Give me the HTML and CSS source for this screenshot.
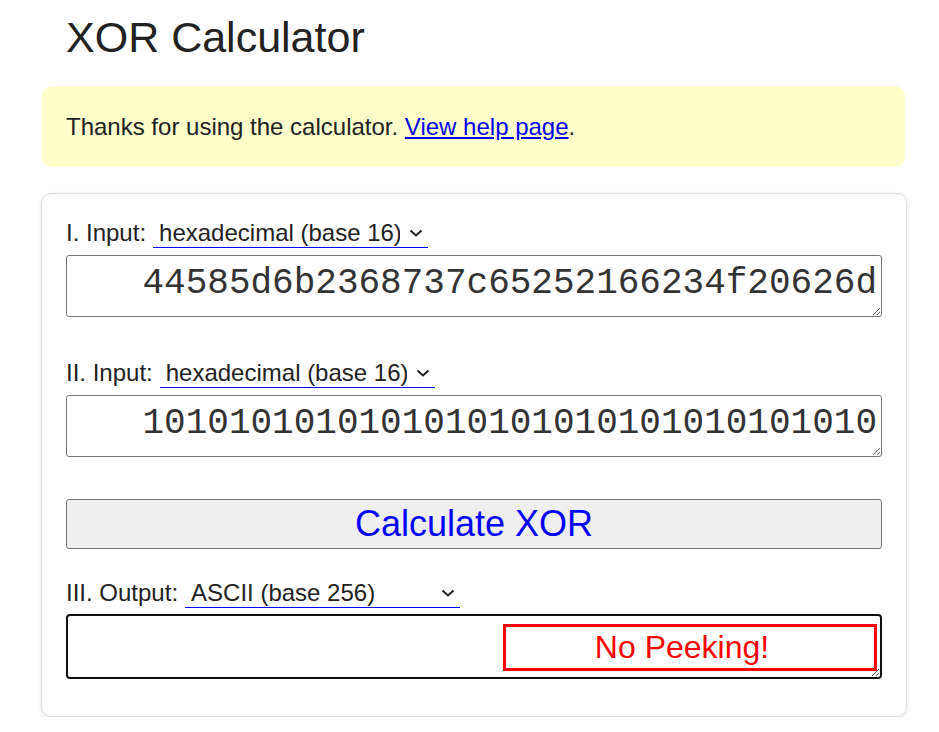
FILE: index.html
```html
<!DOCTYPE html>
<html lang="en">
<head>
<meta charset="utf-8">
<title>XOR Calculator</title>
<link rel="stylesheet" href="styles.css">
</head>
<body>
<div class="page">
  <h1 class="title">XOR Calculator</h1>
  <div class="notice">Thanks for using the calculator. <a href="#" class="help-link">View help page</a>.</div>
  <form class="card" onsubmit="return false;">
    <div class="field">
      <div class="label-row">
        <label class="label" for="in1-base">I. Input:</label>
        <span class="select-wrap">
          <select id="in1-base" class="select">
            <option>hexadecimal (base 16)</option>
            <option>binary (base 2)</option>
            <option>decimal (base 10)</option>
            <option>ASCII (base 256)</option>
          </select>
          <svg class="chevron" width="14" height="8" viewBox="0 0 14 8"><path d="M1.5 1.5 L7 6.5 L12.5 1.5" fill="none" stroke="#222" stroke-width="2"/></svg>
        </span>
      </div>
      <textarea class="value" rows="1" spellcheck="false">44585d6b2368737c65252166234f20626d</textarea>
    </div>
    <div class="field">
      <div class="label-row">
        <label class="label" for="in2-base">II. Input:</label>
        <span class="select-wrap">
          <select id="in2-base" class="select">
            <option>hexadecimal (base 16)</option>
            <option>binary (base 2)</option>
            <option>decimal (base 10)</option>
            <option>ASCII (base 256)</option>
          </select>
          <svg class="chevron" width="14" height="8" viewBox="0 0 14 8"><path d="M1.5 1.5 L7 6.5 L12.5 1.5" fill="none" stroke="#222" stroke-width="2"/></svg>
        </span>
      </div>
      <textarea class="value" rows="1" spellcheck="false">1010101010101010101010101010101010</textarea>
    </div>
    <button type="button" class="calc-btn">Calculate XOR</button>
    <div class="field output-field">
      <div class="label-row">
        <label class="label" for="out-base">III. Output:</label>
        <span class="select-wrap">
          <select id="out-base" class="select">
            <option>ASCII (base 256)</option>
            <option>hexadecimal (base 16)</option>
            <option>binary (base 2)</option>
            <option>decimal (base 10)</option>
          </select>
          <svg class="chevron" width="14" height="8" viewBox="0 0 14 8"><path d="M1.5 1.5 L7 6.5 L12.5 1.5" fill="none" stroke="#222" stroke-width="2"/></svg>
        </span>
      </div>
      <div class="output-wrap">
        <textarea class="value output" rows="1" readonly></textarea>
        <div class="peek">No Peeking!</div>
      </div>
    </div>
  </form>
</div>
</body>
</html>
```

FILE: styles.css
```css
* { box-sizing: border-box; }

html, body {
  margin: 0;
  padding: 0;
  background: #fff;
}

body {
  font-family: "Liberation Sans", Arial, sans-serif;
  color: #222;
}

.page {
  width: 866px;
  margin-left: 41px;
  padding-top: 12px;
}

.title {
  margin: 0;
  padding-left: 25px;
  font-size: 43px;
  line-height: 50px;
  font-weight: normal;
  color: #222;
}

.notice {
  margin-top: 24px;
  margin-left: 1px;
  width: 863px;
  height: 81px;
  padding: 27px 24px 0;
  background: #ffffcc;
  border-radius: 10px;
  font-size: 24px;
  line-height: 28px;
}

.help-link {
  color: #0000ee;
  text-decoration: underline;
}

.card {
  margin-top: 26px;
  width: 866px;
  border: 1px solid #dedede;
  border-radius: 10px;
  box-shadow: 0 1px 4px rgba(0, 0, 0, 0.12);
  padding: 24px 24px 37px 24px;
  display: flex;
  flex-direction: column;
}

.field {
  display: flex;
  flex-direction: column;
  gap: 7px;
}

.field + .field {
  margin-top: 41px;
}

.label-row {
  display: flex;
  align-items: flex-end;
  height: 30px;
}

.label {
  font-size: 24px;
  line-height: 30px;
  color: #222;
}

.select-wrap {
  position: relative;
  margin-left: 7px;
  display: inline-block;
  width: 275px;
  height: 30px;
}

.select {
  -webkit-appearance: none;
  appearance: none;
  width: 275px;
  height: 30px;
  margin: 0;
  padding: 0 28px 0 6px;
  border: none;
  border-bottom: 1px solid #0000ff;
  border-radius: 0;
  background: transparent;
  font-family: "Liberation Sans", Arial, sans-serif;
  font-size: 24px;
  line-height: 29px;
  color: #222;
  outline: none;
}

.chevron {
  position: absolute;
  right: 5px;
  top: 11px;
  pointer-events: none;
}

.value {
  display: block;
  width: 100%;
  height: 62px;
  margin: 0;
  padding: 7px 4px 0 4px;
  border: 1px solid #767676;
  border-radius: 3px;
  font-family: "Liberation Mono", "Courier New", monospace;
  font-size: 36px;
  line-height: 41px;
  color: #333;
  text-align: right;
  overflow: hidden;
  resize: vertical;
  background: #fff;
}

.calc-btn {
  margin-top: 42px;
  width: 100%;
  height: 50px;
  background: #efefef;
  border: 1px solid #767676;
  border-radius: 3px;
  color: #0000ff;
  font-family: "Liberation Sans", Arial, sans-serif;
  font-size: 36px;
  padding: 0;
}

.output-field {
  margin-top: 29px;
  gap: 6px;
}

.output-wrap {
  position: relative;
}

.value.output {
  height: 65px;
  border: 2px solid #111;
  border-radius: 4px;
}

.peek {
  position: absolute;
  right: 5px;
  top: 10px;
  width: 374px;
  height: 47px;
  padding-right: 16px;
  border: 3px solid #ff0000;
  background: #fff;
  color: #ff0000;
  font-size: 32px;
  line-height: 41px;
  text-align: center;
}
```
